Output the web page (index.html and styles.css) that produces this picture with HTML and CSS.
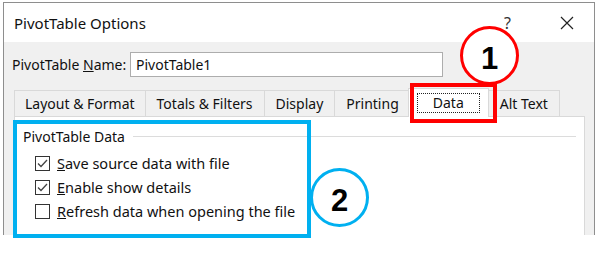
FILE: index.html
```html
<!DOCTYPE html>
<html lang="en">
<head>
  <meta charset="UTF-8" />
  <title>PivotTable Options</title>
  <link rel="stylesheet" href="styles.css">
</head>
<body>
  <div class="window">
    <div class="titlebar">
      <span class="title">PivotTable Options</span>
      <span class="help">?</span>
      <svg class="close" width="14" height="14" viewBox="0 0 14 14">
        <path d="M1 1 L13 13 M13 1 L1 13" stroke="#222" stroke-width="1.2" fill="none"/>
      </svg>
    </div>

    <div class="client">
      <div class="name-row">
        <label class="name-label">PivotTable <u>N</u>ame:</label>
        <div class="name-input">PivotTable1</div>
      </div>

      <div class="tabs">
        <div class="tab first">Layout &amp; Format</div>
        <div class="tab">Totals &amp; Filters</div>
        <div class="tab">Display</div>
        <div class="tab">Printing</div>
        <div class="tab active"><span class="focus">Data</span></div>
        <div class="tab">Alt Text</div>
      </div>

      <div class="panel">
        <div class="group-head">
          <span>PivotTable Data</span>
          <span class="rule"></span>
        </div>
        <div class="checks">
          <div class="check">
            <span class="box checked">
              <svg width="13" height="13" viewBox="0 0 13 13"><path d="M2 6.5 L5 9.5 L11 3" stroke="#444" stroke-width="1.3" fill="none"/></svg>
            </span>
            <span><u>S</u>ave source data with file</span>
          </div>
          <div class="check">
            <span class="box checked">
              <svg width="13" height="13" viewBox="0 0 13 13"><path d="M2 6.5 L5 9.5 L11 3" stroke="#444" stroke-width="1.3" fill="none"/></svg>
            </span>
            <span><u>E</u>nable show details</span>
          </div>
          <div class="check">
            <span class="box"></span>
            <span><u>R</u>efresh data when opening the file</span>
          </div>
        </div>
      </div>
    </div>
  </div>

  <!-- callouts drawn over the dialog -->
  <div class="mark mark-tab"></div>
  <div class="badge badge-red">1</div>
  <div class="mark mark-group"></div>
  <div class="badge badge-blue">2</div>
</body>
</html>
```

FILE: styles.css
```css
* {
  margin: 0;
  padding: 0;
  box-sizing: border-box;
}

body {
  position: relative;
  width: 600px;
  height: 256px;
  overflow: hidden;
  background: #fff;
  font-family: 'Noto Sans', 'Open Sans', sans-serif;
  font-size: 14px;
  color: #111;
}

.window {
  margin: 2px 0 0 3px;
  width: 592px;
  height: 233px;
  border: 1px solid #8e8e8e;
  border-bottom: none;
  display: flex;
  flex-direction: column;
  overflow: hidden;
}

.titlebar {
  height: 39px;
  flex-shrink: 0;
  background: #fff;
  display: flex;
  align-items: center;
  padding-left: 10px;
}

.title {
  font-size: 15px;
}

.help {
  margin-left: auto;
  font-size: 16px;
  color: #333;
  margin-right: 49px;
}

.close {
  margin-right: 20px;
}

.client {
  flex: 1;
  background: #f0f0f0;
  padding: 10px 9px 0 10px;
  display: flex;
  flex-direction: column;
}

.name-row {
  display: flex;
  align-items: center;
  height: 25px;
}

.name-label {
  width: 116px;
  margin-left: -2px;
  margin-right: 2px;
}

.name-input {
  width: 313px;
  height: 25px;
  background: #fff;
  border: 1px solid #adadad;
  padding-left: 5px;
  line-height: 23px;
}

.tabs {
  display: flex;
  align-items: flex-end;
  height: 28px;
  margin-top: 11px;
  position: relative;
  z-index: 1;
}

.tab {
  height: 26px;
  line-height: 25px;
  padding: 0 11px;
  border: 1px solid #d9d9d9;
  border-bottom: none;
  background: #f0f0f0;
  margin-right: -1px;
  white-space: nowrap;
}

.tab.first {
  padding: 0 10px;
}

.tab.active {
  height: 29px;
  margin: 0 -1px -1px -2px;
  padding: 4px 8px 0;
  background: #fff;
  line-height: 18px;
  position: relative;
}

.focus {
  display: inline-block;
  border: 1px dotted #222;
  padding: 0 15px;
  height: 20px;
}

.panel {
  flex: 1;
  background: #fff;
  border: 1px solid #d9d9d9;
  border-bottom: none;
  padding: 9px 8px 0 8px;
}

.group-head {
  display: flex;
  align-items: center;
  gap: 8px;
  height: 20px;
}

.rule {
  flex: 1;
  height: 1px;
  background: #dcdcdc;
}

.checks {
  margin-top: 5px;
  padding-left: 12px;
  font-size: 14.5px;
}

.check {
  display: flex;
  align-items: center;
  gap: 7px;
  height: 24px;
}

.box {
  width: 15px;
  height: 15px;
  border: 1px solid #333;
  background: #fff;
  display: flex;
  align-items: center;
  justify-content: center;
}

/* annotation callouts */
.mark {
  position: absolute;
  z-index: 2;
  border: 4px solid;
}

.mark-tab {
  left: 410px;
  top: 83px;
  width: 87px;
  height: 40px;
  border-color: #ff0000;
}

.mark-group {
  left: 13px;
  top: 120px;
  width: 298px;
  height: 118px;
  border-color: #00b0f0;
}

.badge {
  position: absolute;
  z-index: 3;
  width: 59px;
  height: 59px;
  border-radius: 50%;
  border: 3px solid;
  background: #fff;
  font-family: 'Liberation Sans', Arial, sans-serif;
  font-weight: bold;
  font-size: 31px;
  color: #000;
  display: flex;
  align-items: center;
  justify-content: center;
  padding-top: 7px;
}

.badge-red {
  left: 460px;
  top: 26px;
  border-color: #ff0000;
}

.badge-blue {
  left: 310px;
  top: 168px;
  border-color: #00b0f0;
}
```
